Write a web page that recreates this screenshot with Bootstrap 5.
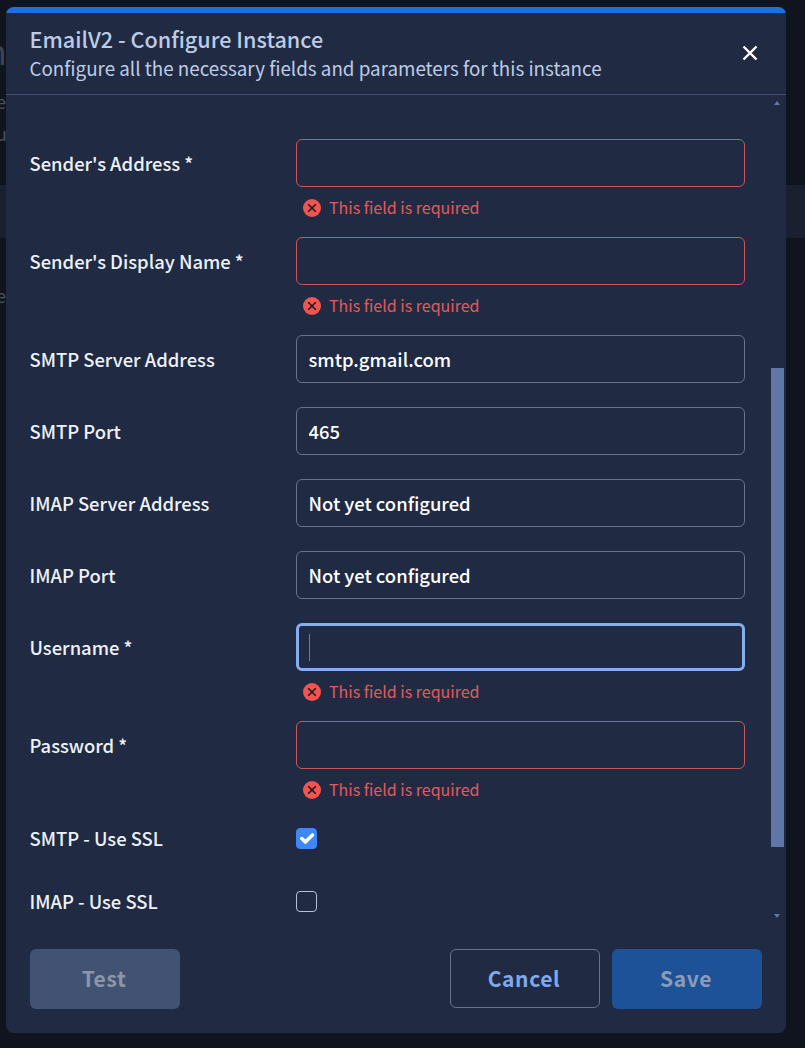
<!doctype html>
<html lang="en">
<head>
<meta charset="utf-8">
<title>EmailV2 - Configure Instance</title>
<link href="https://cdn.jsdelivr.net/npm/bootstrap@5.3.0/dist/css/bootstrap.min.css" rel="stylesheet">
<style>
html,body{height:100%;}
body{background:#10141f;font-family:"Noto Sans CJK SC","Noto Sans",sans-serif;overflow:hidden;position:relative;color:#fff;}
.bg-top{height:185px;position:relative;}
.bg-band{height:53px;background:#1a2030;}
.ghost{position:absolute;left:-4px;color:#4a5160;font-size:18px;line-height:1;}
.ghost-n{top:34px;left:-14px;font-size:34px;color:#3d4453;}
.ghost-e{top:92px;}
.ghost-u{top:124px;}
.ghost-e2{top:286px;}
.dlg{position:absolute;left:6px;top:7px;width:780px;height:1026px;background:#202b43;border-radius:8px;overflow:hidden;}
.dlg-accent{height:6px;background:#1f6fdf;}
.dlg-head{height:82px;border-bottom:1px solid #434f6e;padding:12px 23.5px 0;position:relative;}
.dlg-title{font-size:21.6px;font-weight:500;line-height:28px;color:#bdcbe6;margin:0;}
.dlg-sub{font-size:18.8px;line-height:30px;color:#bdcbe6;margin:0;}
.closer{position:absolute;right:27px;top:31px;width:18px;height:18px;padding:0;background:none;border:0;line-height:0;}
.dlg-body{height:830px;overflow:hidden;padding:44px 41px 0 24px;position:relative;}
.frow{display:flex;margin-bottom:24px;}
.frow.has-err{margin-bottom:8px;}
.flabel{width:266px;flex:none;font-size:18.4px;font-weight:500;line-height:48px;color:#eef2f8;margin:0 0 0 -.5px;padding-right:0;}
.fcol{flex:1;min-width:0;margin-left:.5px;}
.finput{height:48px;background:transparent!important;border:1px solid #66728f;border-radius:6px;color:#fff!important;font-size:18.4px;font-weight:500;padding:0 11.5px;box-shadow:none!important;}
.finput::placeholder{color:#fff;opacity:1;}
.finput.err{border-color:#c8575c;}
.finput.focus{border:3px solid #85aeef;padding-left:10px;}
.caret-mark{position:absolute;left:13px;top:11px;width:1px;height:27px;background:#d0565c;}
.errline{display:flex;align-items:center;gap:8px;padding:0 0 2px 7px;font-size:16px;line-height:24px;color:#e05a5e;height:42px;}
.errline svg{flex:none;margin-top:2px;}
.crow{display:flex;align-items:center;height:21px;margin-bottom:42px;}
.crow-first{margin-top:17px;}
.crow .flabel{line-height:21px;}
.cbox{width:21px;height:21px;margin:0;background-color:transparent;border:1px solid #b4c0d8;border-radius:3px;}
.cbox:checked{background-color:#3f87f5;border-color:#3f87f5;background-size:125%;}
.sbar{position:absolute;right:2px;top:0;bottom:0;width:13px;}
.sthumb{position:absolute;left:0;right:0;top:273px;height:479px;background:#5f76a8;}
.sarrow{position:absolute;left:3px;width:0;height:0;border-left:3.5px solid transparent;border-right:3.5px solid transparent;}
.sarrow.up{top:6px;border-bottom:4px solid #5f76a8;}
.sarrow.down{bottom:7px;border-top:4px solid #5f76a8;}
.dlg-foot{display:flex;padding:24px 24px 0;gap:12px;}
.act{width:150px;height:60px;border-radius:6px;font-size:21px;font-weight:600;letter-spacing:.6px;padding:0 2px 0 0;display:flex;align-items:center;justify-content:center;}
.act-test,.act-test:disabled{background:#425273;border:0;color:#8c96a9;opacity:1;}
.act-cancel{background:transparent;border:1px solid #66728f;color:#7fa9ec;height:59px;}
.act-save,.act-save:disabled{background:#1e5298;border:0;color:#8a9cb8;opacity:1;}
</style>
</head>
<body>
<div class="bg-top">
  <span class="ghost ghost-n">n</span>
  <span class="ghost ghost-e">e</span>
  <span class="ghost ghost-u">u</span>
</div>
<div class="bg-band"></div>
<span class="ghost ghost-e2">e</span>

<div class="dlg modal-content">
  <div class="dlg-accent"></div>
  <div class="dlg-head">
    <h5 class="dlg-title">EmailV2 - Configure Instance</h5>
    <p class="dlg-sub">Configure all the necessary fields and parameters for this instance</p>
    <button class="closer" type="button" aria-label="Close"><svg width="18" height="18" viewBox="0 0 18 18"><path d="M2.5 2.5l13 13M15.5 2.5l-13 13" stroke="#fff" stroke-width="2.4" fill="none"/></svg></button>
  </div>
  <div class="dlg-body">
    <form>
      <div class="frow has-err"><label class="flabel">Sender's Address *</label><div class="fcol"><input class="form-control finput err"><div class="errline"><svg width="18" height="18" viewBox="0 0 18 18"><circle cx="9" cy="9" r="9" fill="#f2544f"/><path d="M5.2 5.2l7.6 7.6M12.8 5.2l-7.6 7.6" stroke="#1a1a24" stroke-width="1.6"/></svg>This field is required</div></div></div>
      <div class="frow has-err"><label class="flabel">Sender's Display Name *</label><div class="fcol"><input class="form-control finput err"><div class="errline"><svg width="18" height="18" viewBox="0 0 18 18"><circle cx="9" cy="9" r="9" fill="#f2544f"/><path d="M5.2 5.2l7.6 7.6M12.8 5.2l-7.6 7.6" stroke="#1a1a24" stroke-width="1.6"/></svg>This field is required</div></div></div>
      <div class="frow"><label class="flabel">SMTP Server Address</label><div class="fcol"><input class="form-control finput" value="smtp.gmail.com"></div></div>
      <div class="frow"><label class="flabel">SMTP Port</label><div class="fcol"><input class="form-control finput" value="465"></div></div>
      <div class="frow"><label class="flabel">IMAP Server Address</label><div class="fcol"><input class="form-control finput" placeholder="Not yet configured"></div></div>
      <div class="frow"><label class="flabel">IMAP Port</label><div class="fcol"><input class="form-control finput" placeholder="Not yet configured"></div></div>
      <div class="frow has-err"><label class="flabel">Username *</label><div class="fcol"><div class="position-relative"><input class="form-control finput focus"><span class="caret-mark"></span></div><div class="errline"><svg width="18" height="18" viewBox="0 0 18 18"><circle cx="9" cy="9" r="9" fill="#f2544f"/><path d="M5.2 5.2l7.6 7.6M12.8 5.2l-7.6 7.6" stroke="#1a1a24" stroke-width="1.6"/></svg>This field is required</div></div></div>
      <div class="frow has-err"><label class="flabel">Password *</label><div class="fcol"><input class="form-control finput err"><div class="errline"><svg width="18" height="18" viewBox="0 0 18 18"><circle cx="9" cy="9" r="9" fill="#f2544f"/><path d="M5.2 5.2l7.6 7.6M12.8 5.2l-7.6 7.6" stroke="#1a1a24" stroke-width="1.6"/></svg>This field is required</div></div></div>
      <div class="crow crow-first"><label class="flabel">SMTP - Use SSL</label><input class="form-check-input cbox" type="checkbox" checked></div>
      <div class="crow"><label class="flabel">IMAP - Use SSL</label><input class="form-check-input cbox" type="checkbox"></div>
    </form>
    <div class="sbar"><span class="sarrow up"></span><div class="sthumb"></div><span class="sarrow down"></span></div>
  </div>
  <div class="dlg-foot">
    <button class="btn act act-test" type="button" disabled>Test</button>
    <button class="btn act act-cancel ms-auto" type="button">Cancel</button>
    <button class="btn act act-save" type="button" disabled>Save</button>
  </div>
</div>
<script src="https://cdn.jsdelivr.net/npm/bootstrap@5.3.0/dist/js/bootstrap.bundle.min.js"></script>
</body>
</html>
